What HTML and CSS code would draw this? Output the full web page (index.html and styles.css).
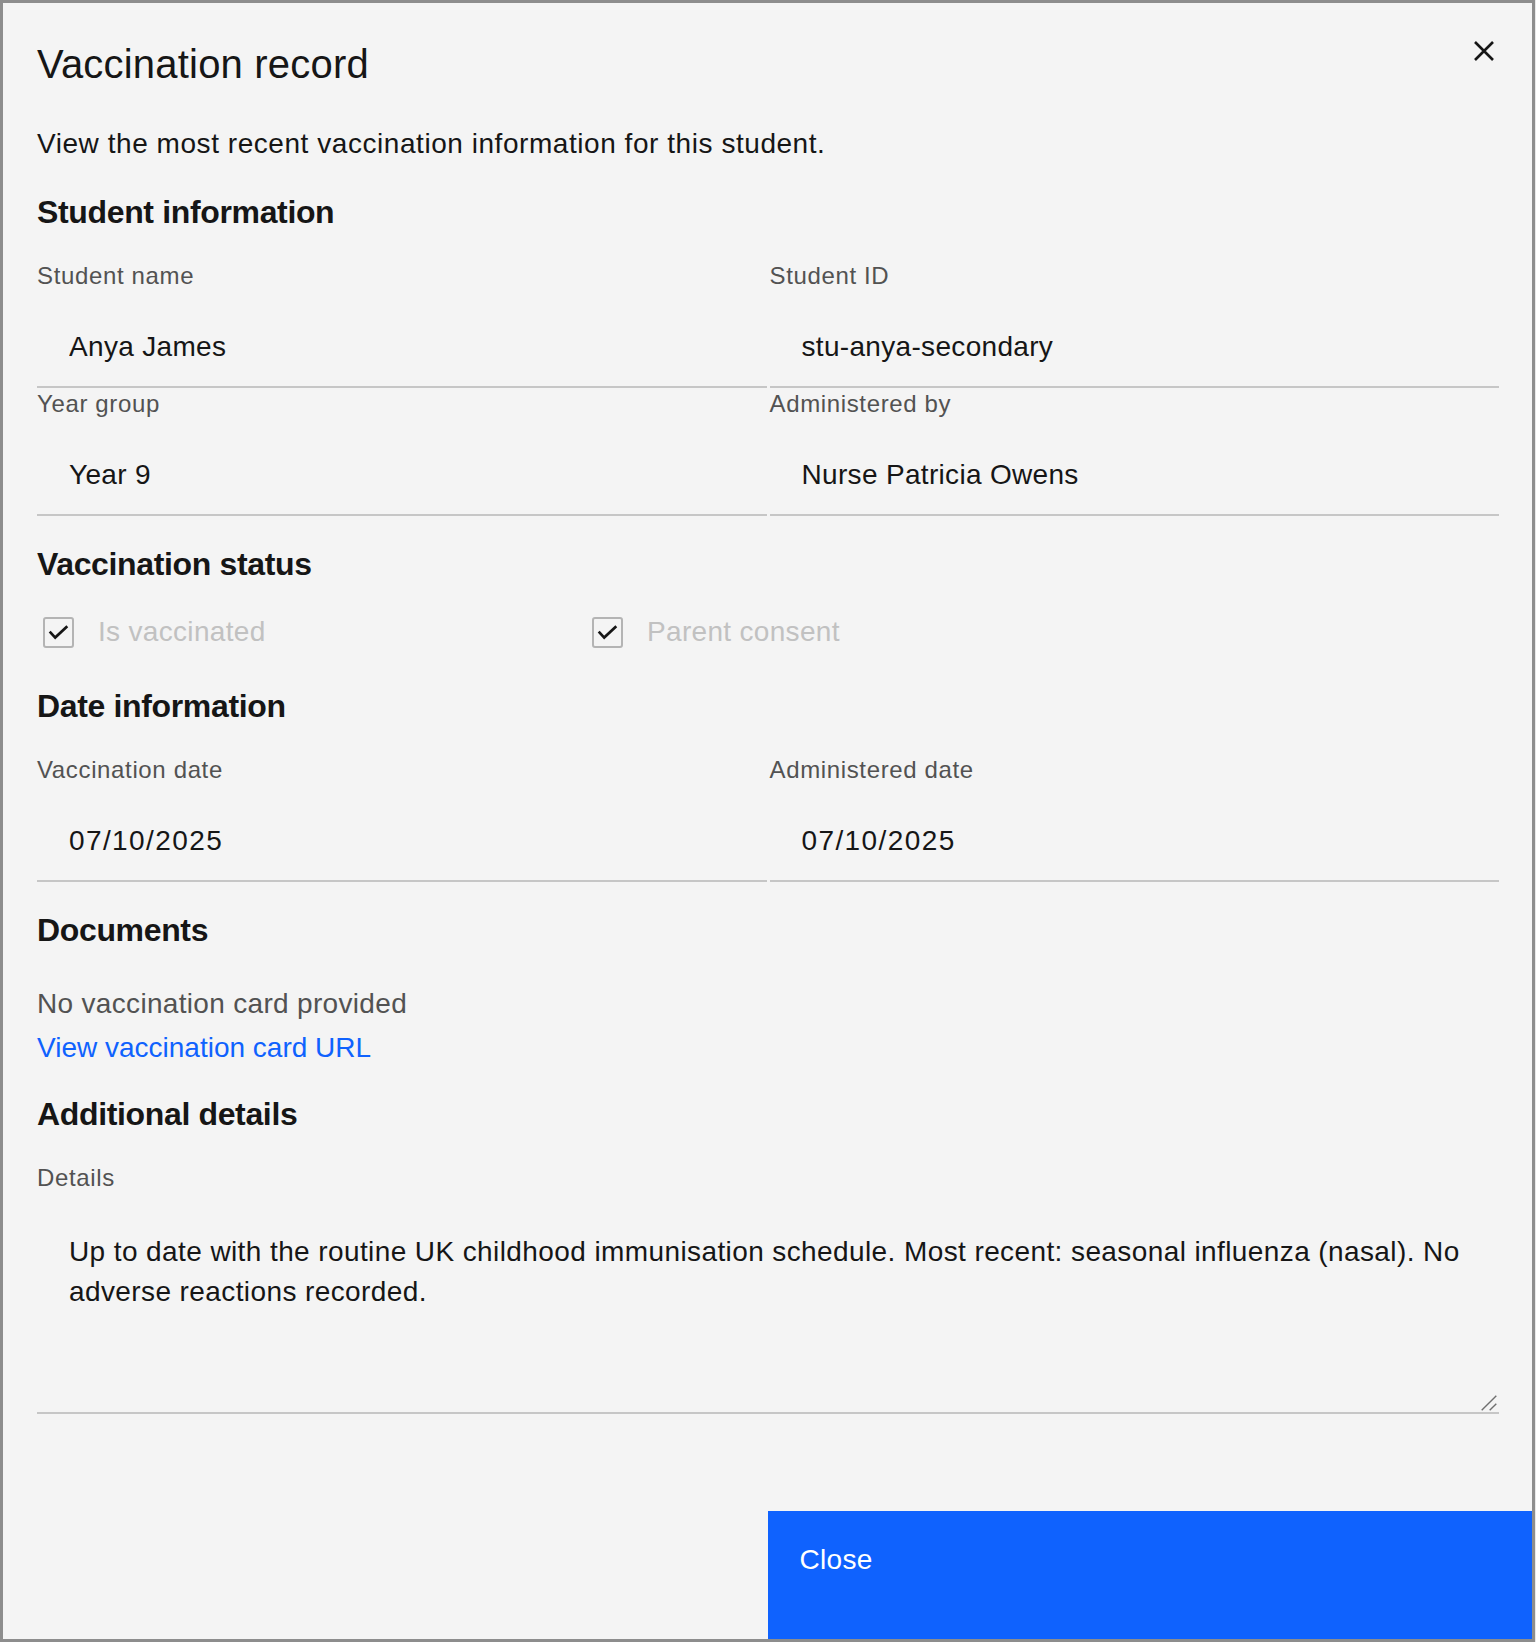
FILE: index.html
```html
<!DOCTYPE html>
<html lang="en">
<head>
<meta charset="utf-8">
<title>Vaccination record</title>
<link rel="stylesheet" href="styles.css">
</head>
<body>
<div class="modal" role="dialog" aria-labelledby="modal-title">
  <button class="modal-close" aria-label="Close">
    <svg width="20" height="20" viewBox="0 0 20 20" aria-hidden="true">
      <path d="M1 1 L19 19 M19 1 L1 19" stroke="#161616" stroke-width="2.6" fill="none"/>
    </svg>
  </button>
  <header class="modal-header">
    <h2 class="modal-title" id="modal-title">Vaccination record</h2>
  </header>
  <div class="modal-content">
    <p class="modal-desc">View the most recent vaccination information for this student.</p>

    <section class="section">
      <h3 class="section-title">Student information</h3>
      <div class="field-grid">
        <div class="field">
          <label class="field-label">Student name</label>
          <input class="field-input" type="text" readonly value="Anya James">
        </div>
        <div class="field">
          <label class="field-label">Student ID</label>
          <input class="field-input" type="text" readonly value="stu-anya-secondary">
        </div>
        <div class="field">
          <label class="field-label">Year group</label>
          <input class="field-input" type="text" readonly value="Year 9">
        </div>
        <div class="field">
          <label class="field-label">Administered by</label>
          <input class="field-input" type="text" readonly value="Nurse Patricia Owens">
        </div>
      </div>
    </section>

    <section class="section">
      <h3 class="section-title">Vaccination status</h3>
      <div class="check-row">
        <div class="check-item">
          <span class="check-box">
            <svg width="31" height="31" viewBox="0 0 31 31" aria-hidden="true">
              <path d="M6.7 14.6 L12.2 20.6 L24.3 9.2" stroke="#161616" stroke-width="2.7" fill="none"/>
            </svg>
          </span>
          <span class="check-label">Is vaccinated</span>
        </div>
        <div class="check-item">
          <span class="check-box">
            <svg width="31" height="31" viewBox="0 0 31 31" aria-hidden="true">
              <path d="M6.7 14.6 L12.2 20.6 L24.3 9.2" stroke="#161616" stroke-width="2.7" fill="none"/>
            </svg>
          </span>
          <span class="check-label">Parent consent</span>
        </div>
      </div>
    </section>

    <section class="section">
      <h3 class="section-title">Date information</h3>
      <div class="field-grid">
        <div class="field">
          <label class="field-label">Vaccination date</label>
          <input class="field-input field-date" type="text" readonly value="07/10/2025">
        </div>
        <div class="field">
          <label class="field-label">Administered date</label>
          <input class="field-input field-date" type="text" readonly value="07/10/2025">
        </div>
      </div>
    </section>

    <section class="section">
      <h3 class="section-title">Documents</h3>
      <div class="docs">
        <p class="docs-text">No vaccination card provided</p>
        <a class="docs-link" href="#">View vaccination card URL</a>
      </div>
    </section>

    <section class="section section-details">
      <h3 class="section-title">Additional details</h3>
      <div class="field">
        <label class="field-label">Details</label>
        <div class="textarea-wrap">
          <textarea class="field-textarea" readonly rows="4">Up to date with the routine UK childhood immunisation schedule. Most recent: seasonal influenza (nasal). No adverse reactions recorded.</textarea>
          <svg class="resize-grip" width="16" height="16" viewBox="0 0 16 16" aria-hidden="true">
            <path d="M0.7 15.3 L15.3 0.7 M8.7 15.3 L15.3 8.7" stroke="#6f6f6f" stroke-width="1.4" fill="none"/>
          </svg>
        </div>
      </div>
    </section>
  </div>
  <footer class="modal-footer">
    <span class="footer-spacer"></span>
    <button class="btn-primary">Close</button>
  </footer>
</div>
</body>
</html>
```

FILE: styles.css
```css
* {
  box-sizing: border-box;
}

html {
  background: #e8e8e8;
}

body {
  margin: 0;
  font-family: "Liberation Sans", Arial, sans-serif;
  color: #161616;
}

.modal {
  position: relative;
  width: 1535px;
  border: 3px solid #8d8d8d;
  background: #f4f4f4;
  display: flex;
  flex-direction: column;
}

.modal-close {
  position: absolute;
  top: 0;
  right: 0;
  width: 96px;
  height: 96px;
  border: none;
  background: transparent;
  padding: 0;
  display: flex;
  align-items: center;
  justify-content: center;
  cursor: pointer;
}

.modal-close svg {
  display: block;
}

.modal-header {
  padding: 33px 33px 0 34px;
}

.modal-title {
  margin: 0;
  font-size: 40px;
  line-height: 56px;
  font-weight: 400;
  letter-spacing: 0.2px;
  color: #161616;
}

.modal-content {
  padding: 0 33px 0 34px;
  margin-bottom: 97px;
}

.modal-desc {
  margin: 32px 0 0;
  font-size: 28px;
  line-height: 40px;
  letter-spacing: 0.55px;
  color: #161616;
}

.section {
  margin-top: 24px;
}

.section-title {
  margin: 0 0 24px;
  font-size: 32px;
  line-height: 48px;
  font-weight: 700;
  letter-spacing: -0.35px;
  color: #161616;
}

.field-grid {
  display: grid;
  grid-template-columns: 1fr 1fr;
  column-gap: 3px;
}

.field {
  display: flex;
  flex-direction: column;
}

.field-label {
  display: block;
  font-size: 24px;
  line-height: 32px;
  letter-spacing: 0.64px;
  color: #525252;
  margin-bottom: 16px;
}

.field-input {
  display: block;
  width: 100%;
  height: 80px;
  padding: 0 32px;
  border: none;
  border-bottom: 2px solid #c6c6c6;
  background: transparent;
  font-family: "Liberation Sans", Arial, sans-serif;
  font-size: 28px;
  letter-spacing: 0.32px;
  color: #161616;
  outline: none;
}

.field-date {
  letter-spacing: 1.4px;
}

.check-row {
  display: grid;
  grid-template-columns: 549px auto;
  padding-bottom: 6px;
}

.check-item {
  display: flex;
  align-items: center;
  height: 40px;
  padding-left: 6px;
  gap: 24px;
}

.check-box {
  width: 31px;
  height: 31px;
  border: 2px solid #b4b4b4;
  border-radius: 3px;
  position: relative;
  flex: none;
}

.check-box svg {
  position: absolute;
  top: -2px;
  left: -2px;
}

.check-label {
  font-size: 28px;
  line-height: 40px;
  letter-spacing: 0.32px;
  color: #c1c1c1;
}

.docs {
  padding-top: 6px;
}

.docs-text {
  margin: 0;
  font-size: 28px;
  line-height: 40px;
  letter-spacing: 0.32px;
  color: #525252;
}

.docs-link {
  display: block;
  margin-top: 4px;
  font-size: 28px;
  line-height: 40px;
  color: #0f62fe;
  text-decoration: none;
}

.section-details {
  margin-top: 22px;
}

.textarea-wrap {
  position: relative;
}

.field-textarea {
  display: block;
  width: 100%;
  height: 204px;
  padding: 22px 32px 20px;
  border: none;
  border-bottom: 2px solid #c6c6c6;
  background: transparent;
  font-family: "Liberation Sans", Arial, sans-serif;
  font-size: 28px;
  line-height: 40px;
  letter-spacing: 0.4px;
  color: #161616;
  resize: none;
  outline: none;
}

.resize-grip {
  position: absolute;
  right: 2px;
  bottom: 3px;
  display: block;
}

.modal-footer {
  display: grid;
  grid-template-columns: 1fr 1fr;
  height: 128px;
}

.btn-primary {
  border: none;
  margin: 0;
  background: #0f62fe;
  color: #ffffff;
  text-align: left;
  padding: 31px 32px 0;
  font-family: "Liberation Sans", Arial, sans-serif;
  font-size: 28px;
  line-height: 36px;
  letter-spacing: 0.32px;
  align-self: stretch;
  display: flex;
  align-items: flex-start;
  cursor: pointer;
}
```
